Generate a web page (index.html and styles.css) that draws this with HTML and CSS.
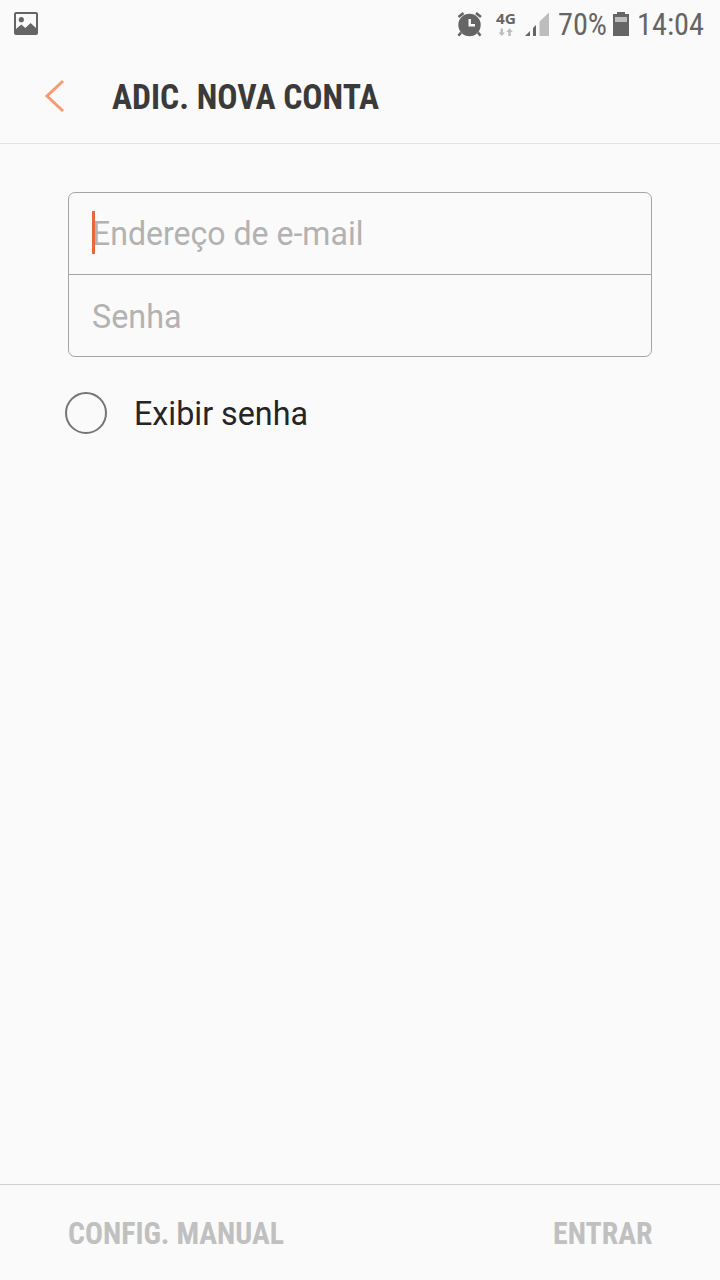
FILE: index.html
```html
<!DOCTYPE html>
<html lang="pt-BR">
<head>
<meta charset="utf-8">
<title>Adic. nova conta</title>
<link rel="stylesheet" href="styles.css">
</head>
<body>
<div class="screen">
  <div class="status">
    <svg class="picture" width="24" height="23" viewBox="0 0 24 23"><path fill="#656565" fill-rule="evenodd" d="M2 0h20Q24 0 24 2v19Q24 23 22 23h-20Q0 23 0 21v-19Q0 0 2 0ZM2 2v15l5.300-4.500 4 3.500 5.300-5 5.400 5V2Z"/><circle cx="7.300" cy="7.700" r="2.600" fill="#656565"/></svg>
    <svg class="indicators" width="266" height="48" viewBox="0 0 266 48">
      <g fill="none" stroke="#656565" stroke-width="2.600"><path d="M4.500 17l5-4M22 13l5 4M7 32.500l-2.500 3.200M24 32.500l2.500 3.200"/></g>
      <circle cx="15.500" cy="25" r="11.200" fill="#656565"/>
      <path d="M15.700 19v6.200h5.300" fill="none" stroke="#fafafa" stroke-width="2.400"/>
      <text class="network" x="42" y="24" textLength="20" lengthAdjust="spacingAndGlyphs">4G</text>
      <path fill="#bdbdbd" d="M46.500 28.500h2.500v4h2l-3.200 3.500-3.300-3.500h2ZM54.300 36h2.500v-4h2l-3.300-3.800-3.200 3.800h2Z"/>
      <path fill="#656565" d="M71 36l5-5v5ZM79 28l3-3v11h-3Z"/><path fill="#bdbdbd" d="M85.500 21.500l9.500-9v23.500h-9.500Z"/>
      <text class="status-text" x="104" y="35" textLength="49" lengthAdjust="spacingAndGlyphs">70%</text>
      <path fill="#656565" d="M163 12h8v2h4v22h-16V14h4Z"/><path fill="#bdbdbd" d="M161 17h12v5h-12Z"/>
      <text class="status-text" x="183" y="35" textLength="67" lengthAdjust="spacingAndGlyphs">14:04</text>
    </svg>
  </div>
  <header class="header">
    <svg class="back" width="22" height="34" viewBox="0 0 22 34"><path d="M20 2L4 17l16 15" fill="none" stroke="#fc9a6f" stroke-width="3"/></svg>
    <svg class="title" width="280" height="48" viewBox="0 0 280 48"><text x="0" y="37" textLength="267" lengthAdjust="spacingAndGlyphs">ADIC. NOVA CONTA</text></svg>
  </header>
  <main class="form">
    <div class="fields">
      <div class="field"><svg width="274" height="48" viewBox="0 0 274 48"><text x="0" y="35" textLength="271.500" lengthAdjust="spacingAndGlyphs">Endereço de e-mail</text></svg><i class="caret"></i></div>
      <div class="field"><svg width="100" height="48" viewBox="0 0 100 48"><text x="0" y="35.500" textLength="89.500" lengthAdjust="spacingAndGlyphs">Senha</text></svg></div>
    </div>
    <div class="show"><span class="radio"></span><svg width="180" height="42" viewBox="0 0 180 42"><text x="-1" y="33" textLength="174" lengthAdjust="spacingAndGlyphs">Exibir senha</text></svg></div>
  </main>
  <footer class="footer">
    <svg width="218" height="48" viewBox="0 0 218 48"><text x="0" y="35" textLength="216" lengthAdjust="spacingAndGlyphs">CONFIG. MANUAL</text></svg>
    <svg width="100" height="48" viewBox="0 0 100 48"><text x="1" y="35" textLength="99.500" lengthAdjust="spacingAndGlyphs">ENTRAR</text></svg>
  </footer>
</div>
</body>
</html>
```
FILE: styles.css
```css
* { box-sizing: border-box; }
body { margin: 0; background: #fafafa; font-family: Roboto, sans-serif; }
svg { display: block; overflow: visible; }
.screen { width: 720px; height: 1280px; display: flex; flex-direction: column; overflow: hidden; }
.status { height: 48px; display: flex; align-items: flex-start; justify-content: space-between; padding-left: 14px; }
.picture { margin-top: 12px; }
.network { font: 700 15px "Open Sans", sans-serif; fill: #656565; }
.status-text { font: 400 31px "Roboto Condensed", Roboto, sans-serif; fill: #656565; }
.header { height: 96px; display: flex; align-items: center; padding-left: 43px; border-bottom: 1px solid #e3e3e3; }
.title { margin-left: 47px; }
.title text { font: 700 34.5px "Roboto Condensed", Roboto, sans-serif; fill: #3a3a3a; }
.form { flex: 1; padding: 48px 68px 0; }
.fields { height: 165px; border: 1px solid #a5a5a5; border-radius: 7px; display: flex; flex-direction: column; }
.field { position: relative; flex: 1; display: flex; align-items: center; padding-left: 23px; }
.field text { font-size: 32.5px; fill: #b2b2b2; }
.field + .field { border-top: 1px solid #a5a5a5; }
.caret { position: absolute; left: 23px; top: 18px; width: 3px; height: 43px; background: #e5693c; }
.show { display: flex; align-items: center; gap: 28px; margin: 35px 0 0 -3px; }
.show text { font-size: 32.5px; fill: #252525; }
.radio { width: 42px; height: 42px; border: 2px solid #757575; border-radius: 50%; }
.footer { height: 96px; display: flex; align-items: center; justify-content: space-between; padding: 0 68px; border-top: 1px solid #cfcfcf; }
.footer text { font: 700 30.5px "Roboto Condensed", Roboto, sans-serif; fill: #c0c0c0; }
```
